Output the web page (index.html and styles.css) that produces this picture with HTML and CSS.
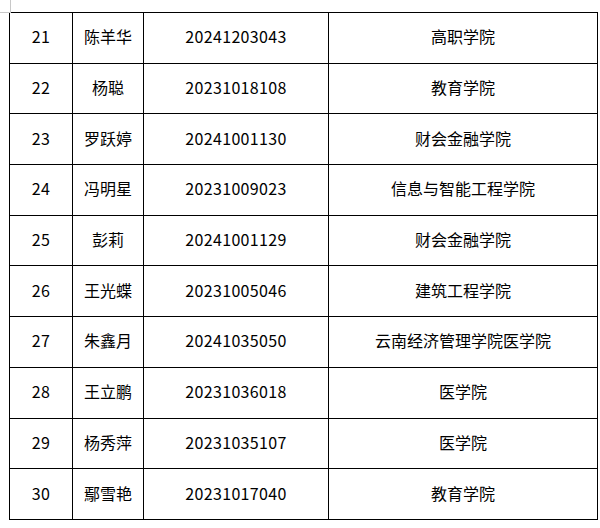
FILE: index.html
```html
<!DOCTYPE html>
<html lang="zh-CN">
<head>
<meta charset="utf-8">
<title>名单</title>
<link rel="stylesheet" href="styles.css">
</head>
<body>
<div class="page">
  <table class="roster">
    <colgroup>
      <col class="c-no">
      <col class="c-name">
      <col class="c-id">
      <col class="c-college">
    </colgroup>
    <tbody>
      <tr><td class="num">21</td><td>陈羊华</td><td class="num">20241203043</td><td>高职学院</td></tr>
      <tr><td class="num">22</td><td>杨聪</td><td class="num">20231018108</td><td>教育学院</td></tr>
      <tr><td class="num">23</td><td>罗跃婷</td><td class="num">20241001130</td><td>财会金融学院</td></tr>
      <tr><td class="num">24</td><td>冯明星</td><td class="num">20231009023</td><td>信息与智能工程学院</td></tr>
      <tr><td class="num">25</td><td>彭莉</td><td class="num">20241001129</td><td>财会金融学院</td></tr>
      <tr><td class="num">26</td><td>王光蝶</td><td class="num">20231005046</td><td>建筑工程学院</td></tr>
      <tr><td class="num">27</td><td>朱鑫月</td><td class="num">20241035050</td><td>云南经济管理学院医学院</td></tr>
      <tr><td class="num">28</td><td>王立鹏</td><td class="num">20231036018</td><td>医学院</td></tr>
      <tr><td class="num">29</td><td>杨秀萍</td><td class="num">20231035107</td><td>医学院</td></tr>
      <tr><td class="num">30</td><td>鄢雪艳</td><td class="num">20231017040</td><td>教育学院</td></tr>
    </tbody>
  </table>
</div>
</body>
</html>
```

FILE: styles.css
```css
html, body {
  margin: 0;
  padding: 0;
  background: #ffffff;
}

body {
  width: 600px;
  height: 528px;
  overflow: hidden;
  font-family: "Noto Sans CJK SC", "Noto Sans", sans-serif;
  color: #000000;
}

.page {
  position: relative;
  padding: 12px 0 0 9px;
}

.page::before {
  content: "";
  position: absolute;
  left: 0;
  top: 0;
  width: 10px;
  height: 12px;
  border-right: 1px solid #c8c8c8;
  border-bottom: 1px solid #c8c8c8;
}

.roster {
  border-collapse: collapse;
  table-layout: fixed;
  width: 588px;
}

.c-no { width: 63px; }
.c-name { width: 71px; }
.c-id { width: 185px; }
.c-college { width: 269px; }

.roster tr {
  height: 50.7px;
}

.roster td {
  border: 1px solid #000000;
  padding: 0 0 3px 0;
  text-align: center;
  vertical-align: middle;
  font-size: 16px;
  line-height: 20px;
}

.roster td.num {
  letter-spacing: 0.35px;
}
```
